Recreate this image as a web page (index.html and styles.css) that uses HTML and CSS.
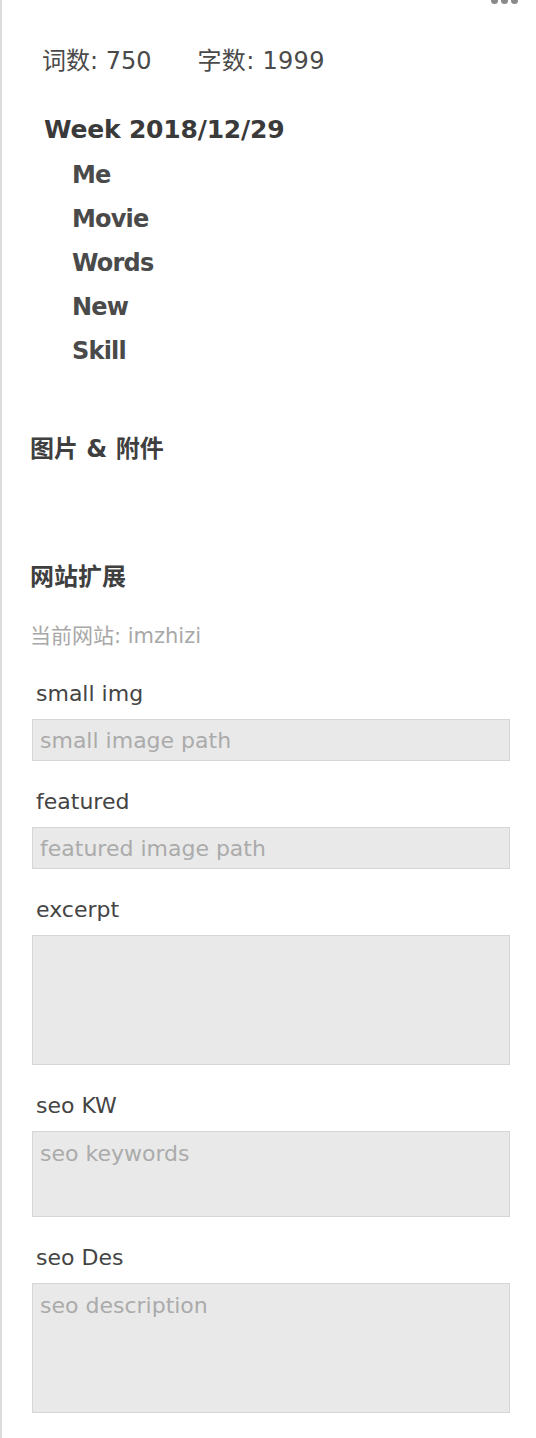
FILE: index.html
```html
<!DOCTYPE html>
<html lang="zh">
<head>
<meta charset="utf-8">
<title>Sidebar</title>
<link rel="stylesheet" href="styles.css">
</head>
<body>
<div class="panel">
  <div class="more"><span class="dot"></span><span class="dot"></span><span class="dot"></span></div>
  <div class="stats"><span>词数: 750</span><span>字数: 1999</span></div>
  <div class="toc">
    <div class="toc-title">Week 2018/12/29</div>
    <div class="toc-list">
      <div class="toc-item">Me</div>
      <div class="toc-item">Movie</div>
      <div class="toc-item">Words</div>
      <div class="toc-item">New</div>
      <div class="toc-item">Skill</div>
    </div>
  </div>
  <div class="heading h-attach">图片 &amp; 附件</div>
  <div class="heading h-ext">网站扩展</div>
  <div class="site">当前网站: imzhizi</div>
  <div class="field">
    <label class="label">small img</label>
    <input class="input" type="text" placeholder="small image path">
  </div>
  <div class="field">
    <label class="label">featured</label>
    <input class="input" type="text" placeholder="featured image path">
  </div>
  <div class="field">
    <label class="label">excerpt</label>
    <textarea class="area area-lg"></textarea>
  </div>
  <div class="field">
    <label class="label">seo KW</label>
    <textarea class="area area-sm" placeholder="seo keywords"></textarea>
  </div>
  <div class="field">
    <label class="label">seo Des</label>
    <textarea class="area area-lg" placeholder="seo description"></textarea>
  </div>
</div>
</body>
</html>
```

FILE: styles.css
```css
html, body {
  margin: 0;
  padding: 0;
  background: #fff;
}
body {
  font-family: "DejaVu Sans", "Noto Sans CJK SC", sans-serif;
  color: #444;
}
.panel {
  position: relative;
  min-height: 1438px;
  box-sizing: border-box;
  border-left: 2px solid #dcdcdc;
  padding: 45px 26px 0 28px;
  overflow: hidden;
}
.more {
  position: absolute;
  top: -3px;
  right: 18px;
  display: flex;
  gap: 3px;
}
.dot {
  width: 7px;
  height: 7px;
  border-radius: 50%;
  background: #8a8a8a;
}
.stats {
  display: flex;
  gap: 46px;
  padding-left: 12px;
  font-size: 24px;
  line-height: 32px;
  color: #4a4a4a;
}
.stats span:last-child {
  letter-spacing: 0.3px;
}
.toc {
  margin-top: 31px;
  font-weight: bold;
}
.toc-title {
  padding-left: 14px;
  font-size: 25px;
  line-height: 44px;
  letter-spacing: -0.2px;
  color: #3a3a3a;
}
.toc-list {
  margin-top: 1px;
}
.toc-item {
  padding-left: 42px;
  font-size: 24px;
  line-height: 44px;
  letter-spacing: -0.8px;
  color: #4a4a4a;
}
.heading {
  font-weight: bold;
  font-size: 24px;
  line-height: 32px;
  color: #3f3f3f;
}
.h-attach {
  margin-top: 60px;
}
.h-ext {
  margin-top: 96px;
}
.site {
  margin-top: 29px;
  font-size: 21px;
  line-height: 28px;
  color: #a8a8a8;
}
.field {
  display: flex;
  flex-direction: column;
  margin-top: 29px;
  padding-left: 2px;
}
.field + .field {
  margin-top: 26px;
}
.label {
  padding-left: 4px;
  font-size: 22px;
  line-height: 30px;
  color: #444;
}
.input, .area {
  margin: 10px 0 0 0;
  width: 478px;
  box-sizing: border-box;
  background: #e9e9e9;
  border: 1px solid #d6d6d6;
  border-radius: 0;
  outline: none;
  font-family: "DejaVu Sans", "Noto Sans CJK SC", sans-serif;
  font-size: 22px;
  color: #555;
  padding: 0 7px;
}
.input {
  height: 42px;
  line-height: 40px;
}
.area {
  resize: none;
  display: block;
  padding-top: 8px;
  line-height: 28px;
}
.area-lg {
  height: 130px;
}
.area-sm {
  height: 86px;
}
.input::placeholder, .area::placeholder {
  color: #ababab;
  opacity: 1;
}
```
